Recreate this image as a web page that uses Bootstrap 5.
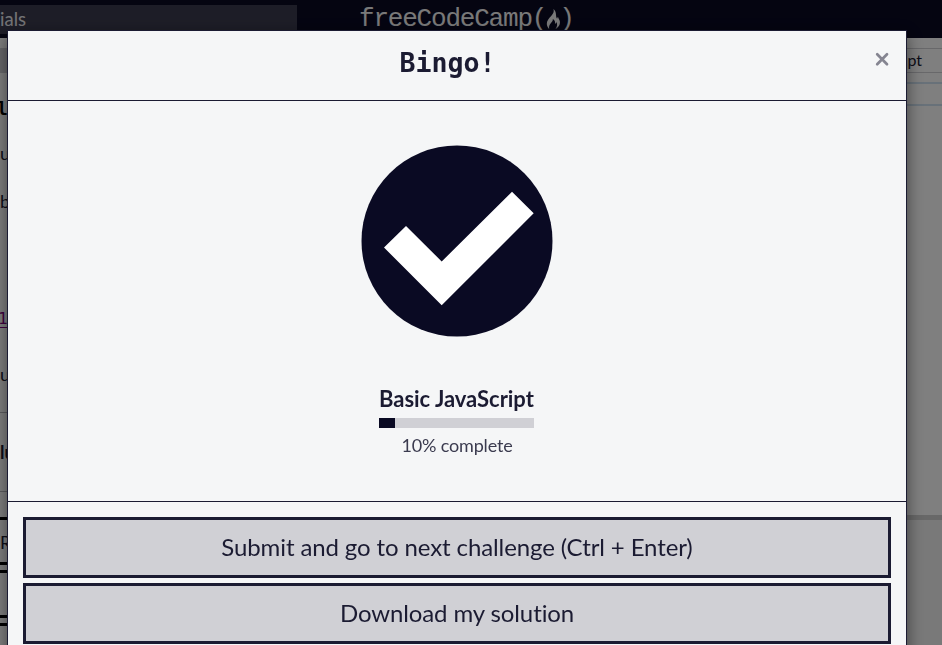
<!DOCTYPE html>
<html lang="en">
<head>
<meta charset="utf-8">
<meta name="viewport" content="width=device-width, initial-scale=1">
<title>Basic JavaScript | freeCodeCamp</title>
<link href="https://cdn.jsdelivr.net/npm/bootstrap@5.3.0/dist/css/bootstrap.min.css" rel="stylesheet">
<style>
  html, body { height: 100%; overflow: hidden; }
  body { font-family: Lato, sans-serif; color: #1b1b32; background: #fff; font-variant-ligatures: none; }
  .topbar { height: 38px; background: #0a0a23; }
  .search-box { width: 297px; height: 29px; margin-top: 5px; background: #3b3b4f; color: #e8e8ec; font-size: 18.5px; line-height: 29px; }
  .brand { margin-left: 62px; padding-top: 1px; font: 26px/36px "Liberation Mono", monospace; letter-spacing: -1.2px; color: #f2f2f2; }
  .brand svg { width: 16px; height: 20px; margin: 0 0 0 -1px; }
  .brand .paren { margin-left: -2px; }
  .side { width: 40px; background: #fff; font-size: 18px; line-height: 24px; overflow: hidden; white-space: nowrap; }
  .tab-block { height: 25px; margin: 10px 0 24px; background: #d0d0d5; }
  .mono { font-family: "DejaVu Sans Mono", monospace; }
  .side-title { font-size: 18px; font-weight: 700; margin-bottom: 20px; margin-left: -3px; color: #000; }
  .code-num { color: #800080; font-size: 16px; margin: 94px 0 31px -2px; text-decoration: underline; text-underline-offset: 3px; }
  .side-rule { height: 1px; background: #b8b8bd; }
  .thick { height: 3px; background: #000; }
  .tabs { height: 25px; margin-top: 10px; border-top: 1px solid #d0d0d5; border-bottom: 1px solid #d0d0d5; font-size: 16px; line-height: 22px; padding-right: 20px; }
  .blue-row { height: 24px; margin-top: 9px; border-top: 2px solid #d0e2f2; border-bottom: 2px solid #d0e2f2; }
  .splitter { height: 5px; margin-top: 409px; background: #d0d0d0; }
  .console { background: #f2f2f2; }
  .done-dialog { width: 900px; max-width: 900px; margin: 30px 0 0 7px; }
  .done-dialog .modal-content { height: 660px; background: #f5f6f7; border: 1px solid #1b1b32; box-shadow: 0 5px 15px rgba(0,0,0,.5); }
  .done-dialog .modal-header { height: 70px; border-bottom: 1px solid #1b1b32; padding: 0 15px; }
  .done-title { font: 700 26.6px/38px "DejaVu Sans Mono", monospace; padding: 0 1px 5px 0; color: #1b1b32; }
  .close-x { width: 18px; height: 18px; margin-bottom: 14px; }
  .done-body { height: 401px; flex: none; border-bottom: 1px solid #1b1b32; padding: 44px 0 0; }
  .check { width: 192px; height: 192px; }
  .course-block { width: 156px; margin-top: 48px; }
  .course { font-size: 22px; font-weight: 700; line-height: 28px; letter-spacing: -.03px; white-space: nowrap; }
  .done-body .progress { width: 155px; height: 10px; margin-top: 5px; background: #d0d0d5; }
  .done-body .progress-bar { background: #0a0a23; }
  .percent { font-size: 18px; line-height: 24px; margin-top: 5px; letter-spacing: -.15px; color: #3b3b4f; }
  .actions { padding: 15px 15px 0; gap: 5px; }
  .btn-done { height: 61px; padding: 0 0 2px; font-size: 24px; letter-spacing: -.11px; color: #1b1b32; background: #d0d0d5; border: 3px solid #1b1b32; }
  .btn-done:hover { background: #1b1b32; color: #f5f6f7; }
</style>
</head>
<body>
<div class="d-flex flex-column vh-100">
  <header class="topbar d-flex align-items-start">
    <div class="search-box">ials</div>
    <div class="brand d-flex align-items-center"><span>freeCodeCamp(</span><svg viewBox="0 0 16 22" aria-hidden="true"><path fill="#f2f2f2" d="M8.500 0c1 3.200-.4 5.200-2.500 7.600C3.500 10.300 1 13 1.200 16.500c.1 2.200 1.200 4 2.600 5.500-.5-2.700.2-5 2.200-7 1.300-1.200 2-2.200 1.800-4 2.200 1.200 3 3.300 2.300 5.300 1.100-.3 1.700-1.300 1.600-2.400 1.500 2.900.8 5.700-1 8.100 4-2.100 5.900-6 4.500-9.600-.5-1.300-1.300-2.300-1.700-3.700-.8.500-1 1.200-.8 2.100C10.300 8.700 12.700 3 8.500 0Z"/></svg><span class="paren">)</span></div>
  </header>
  <main class="d-flex flex-grow-1">
    <aside class="side">
      <div class="tab-block"></div>
      <div class="side-title mono">l</div>
      <div class="mb-4">u</div>
      <div>b</div>
      <div class="code-num mono">1</div>
      <div>u</div>
      <div class="side-rule" style="margin-top:26px"></div>
      <div style="margin-top:27px"><b>lu</b></div>
      <div class="side-rule" style="margin-top:27px"></div>
      <div class="thick" style="margin-top:25px"></div>
      <div style="margin:10px 0 8px">R</div>
      <div class="thick"></div>
      <div class="thick" style="margin-top:5px"></div>
      <div class="thick" style="margin-top:42px"></div>
      <div class="thick" style="margin-top:5px"></div>
    </aside>
    <section class="d-flex flex-column flex-grow-1">
      <div class="tabs text-end">script.js javascript</div>
      <div class="blue-row"></div>
      <div class="splitter"></div>
      <div class="console flex-grow-1"></div>
    </section>
  </main>
</div>
<div class="modal-backdrop show"></div>
<div class="modal show d-block overflow-hidden" tabindex="-1" role="dialog">
  <div class="modal-dialog done-dialog">
    <div class="modal-content rounded-0">
      <div class="modal-header rounded-0">
        <h1 class="done-title flex-grow-1 text-center mb-0">Bingo!</h1>
        <svg class="close-x" viewBox="0 0 18 18" role="button" aria-label="Close"><path d="M4.200 4.200l9.800 10M14 4.200l-9.800 10" stroke="#858591" stroke-width="2.700" stroke-linecap="round"/></svg>
      </div>
      <div class="done-body d-flex flex-column align-items-center">
        <svg class="check" viewBox="0 0 192 192" aria-hidden="true"><circle cx="96" cy="96" r="95.500" fill="#0a0a23"/><path fill="#fff" d="M23 102.500 45 81l35.700 35.500L151 46.700l21.700 21.600L80.700 160.300Z"/></svg>
        <div class="course-block">
          <div class="course">Basic JavaScript</div>
          <div class="progress rounded-0"><div class="progress-bar" style="width:10%"></div></div>
        </div>
        <div class="percent">10% complete</div>
      </div>
      <div class="actions d-grid">
        <button class="btn btn-done rounded-0" type="button">Submit and go to next challenge (Ctrl + Enter)</button>
        <button class="btn btn-done rounded-0" type="button">Download my solution</button>
      </div>
    </div>
  </div>
</div>
<script src="https://cdn.jsdelivr.net/npm/bootstrap@5.3.0/dist/js/bootstrap.bundle.min.js"></script>
</body>
</html>
